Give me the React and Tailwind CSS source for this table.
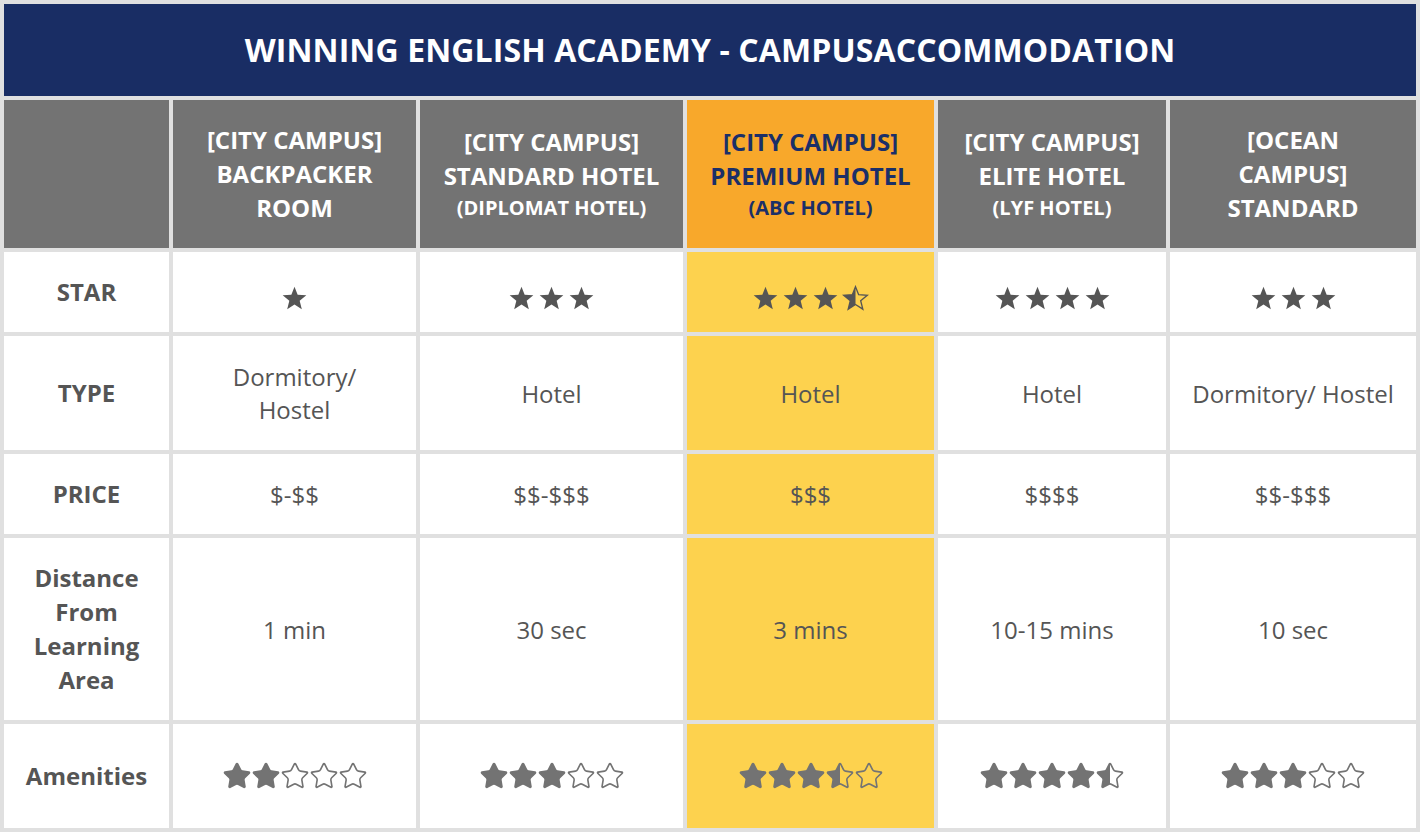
import React, { useId } from 'react';

const cols = [
  {
    title: ['[CITY CAMPUS]', 'BACKPACKER', 'ROOM'],
    stars: 1,
    type: ['Dormitory/', 'Hostel'],
    price: '$-$$',
    distance: '1 min',
    amenities: 2
  },
  {
    title: ['[CITY CAMPUS]', 'STANDARD HOTEL'],
    sub: '(DIPLOMAT HOTEL)',
    stars: 3,
    type: ['Hotel'],
    price: '$$-$$$',
    distance: '30 sec',
    amenities: 3
  },
  {
    title: ['[CITY CAMPUS]', 'PREMIUM HOTEL'],
    sub: '(ABC HOTEL)',
    stars: 3.5,
    type: ['Hotel'],
    price: '$$$',
    distance: '3 mins',
    amenities: 3.5,
    featured: true
  },
  {
    title: ['[CITY CAMPUS]', 'ELITE HOTEL'],
    sub: '(LYF HOTEL)',
    stars: 4,
    type: ['Hotel'],
    price: '$$$$',
    distance: '10-15 mins',
    amenities: 4.5
  },
  {
    title: ['[OCEAN', 'CAMPUS]', 'STANDARD'],
    stars: 3,
    type: ['Dormitory/ Hostel'],
    price: '$$-$$$',
    distance: '10 sec',
    amenities: 3
  }
];

const SHARP = '12,1.5 14.8,8.6 22.5,9.1 16.6,14 18.5,21.5 12,17.3 5.5,21.5 7.4,14 1.5,9.1 9.2,8.6';

const SharpStar = ({ half }) => {
  const id = useId();
  return (
    <svg width="27" height="27" viewBox="0 0 24 24">
      {half ? (
        <>
          <defs>
            <clipPath id={id}>
              <rect x="0" y="0" width="12" height="24" />
            </clipPath>
          </defs>
          <polygon points={SHARP} fill="#555555" clipPath={`url(#${id})`} />
          <polygon points={SHARP} fill="none" stroke="#555555" strokeWidth="1.2" strokeLinejoin="miter" />
        </>
      ) : (
        <polygon points={SHARP} fill="#555555" />
      )}
    </svg>
  );
};

const ROUND =
  'M11.525 2.295a.53.53 0 0 1 .95 0l2.31 4.679a2.123 2.123 0 0 0 1.595 1.16l5.166.756a.53.53 0 0 1 .294.904l-3.736 3.638a2.123 2.123 0 0 0-.611 1.878l.882 5.14a.53.53 0 0 1-.771.56l-4.618-2.428a2.122 2.122 0 0 0-1.973 0L6.396 21.01a.53.53 0 0 1-.77-.56l.881-5.139a2.122 2.122 0 0 0-.611-1.879L2.16 9.795a.53.53 0 0 1 .294-.906l5.165-.755a2.122 2.122 0 0 0 1.597-1.16z';

const RoundStar = ({ fill }) => {
  const id = useId();
  return (
    <svg width="30" height="30" viewBox="0 0 24 24">
      <defs>
        <clipPath id={id}>
          <rect x="0" y="0" width={fill === 'half' ? 12 : 24} height="24" />
        </clipPath>
      </defs>
      {fill !== 'empty' && <path d={ROUND} fill="#737373" clipPath={`url(#${id})`} />}
      <path d={ROUND} fill="none" stroke="#737373" strokeWidth="1.3" strokeLinejoin="round" />
    </svg>
  );
};

const StarRating = ({ value }) => {
  const full = Math.floor(value);
  return (
    <div className="flex items-center gap-[3px] mt-3">
      {Array.from({ length: full }).map((_, i) => <SharpStar key={i} />)}
      {value % 1 !== 0 && <SharpStar half />}
    </div>
  );
};

const Amenities = ({ value }) => (
  <div className="flex items-center gap-0 -space-x-px">
    {[0, 1, 2, 3, 4].map((i) => (
      <RoundStar key={i} fill={value >= i + 1 ? 'full' : value > i ? 'half' : 'empty'} />
    ))}
  </div>
);

const Label = ({ children }) => (
  <div className="bg-white flex items-center justify-center text-center text-[24px] leading-[34px] font-bold text-[#555555] px-2">
    {children}
  </div>
);

const Cell = ({ featured, children }) => (
  <div
    className={`flex items-center justify-center text-center text-[24px] leading-[33px] text-[#555555] ${
      featured ? 'bg-[#fdd24e]' : 'bg-white'
    }`}
  >
    {children}
  </div>
);

export default function App() {
  return (
    <div className="w-[1420px] h-[832px] bg-[#e0e0e0] p-1 grid gap-1 grid-cols-[165px_243px_263px_247px_228px_246px] grid-rows-[92px_148px_80px_114px_80px_182px_104px] font-['Open_Sans',sans-serif]">
      <div className="col-span-6 bg-[#192d64] flex items-center justify-center">
        <h1 className="text-white font-bold text-[32px] tracking-[0.1px]">WINNING ENGLISH ACADEMY - CAMPUSACCOMMODATION</h1>
      </div>

      {/* header row */}
      <div className="bg-[#737373]" />
      {cols.map((c, i) => (
        <div
          key={i}
          className={`flex flex-col items-center justify-center text-center font-bold ${
            c.featured ? 'bg-[#f8a82b] text-[#1b2f68]' : 'bg-[#737373] text-white'
          }`}
        >
          {c.title.map((t) => (
            <div key={t} className="text-[24px] leading-[34px]">{t}</div>
          ))}
          {c.sub && <div className="text-[20px] leading-[30px]">{c.sub}</div>}
        </div>
      ))}

      <Label>STAR</Label>
      {cols.map((c, i) => (
        <Cell key={i} featured={c.featured}>
          <StarRating value={c.stars} />
        </Cell>
      ))}

      <Label>TYPE</Label>
      {cols.map((c, i) => (
        <Cell key={i} featured={c.featured}>
          <div>
            {c.type.map((t) => (
              <div key={t}>{t}</div>
            ))}
          </div>
        </Cell>
      ))}

      <Label>PRICE</Label>
      {cols.map((c, i) => (
        <Cell key={i} featured={c.featured}>{c.price}</Cell>
      ))}

      <Label>
        Distance
        <br />
        From
        <br />
        Learning
        <br />
        Area
      </Label>
      {cols.map((c, i) => (
        <Cell key={i} featured={c.featured}>{c.distance}</Cell>
      ))}

      <Label>Amenities</Label>
      {cols.map((c, i) => (
        <Cell key={i} featured={c.featured}>
          <Amenities value={c.amenities} />
        </Cell>
      ))}
    </div>
  );
}
